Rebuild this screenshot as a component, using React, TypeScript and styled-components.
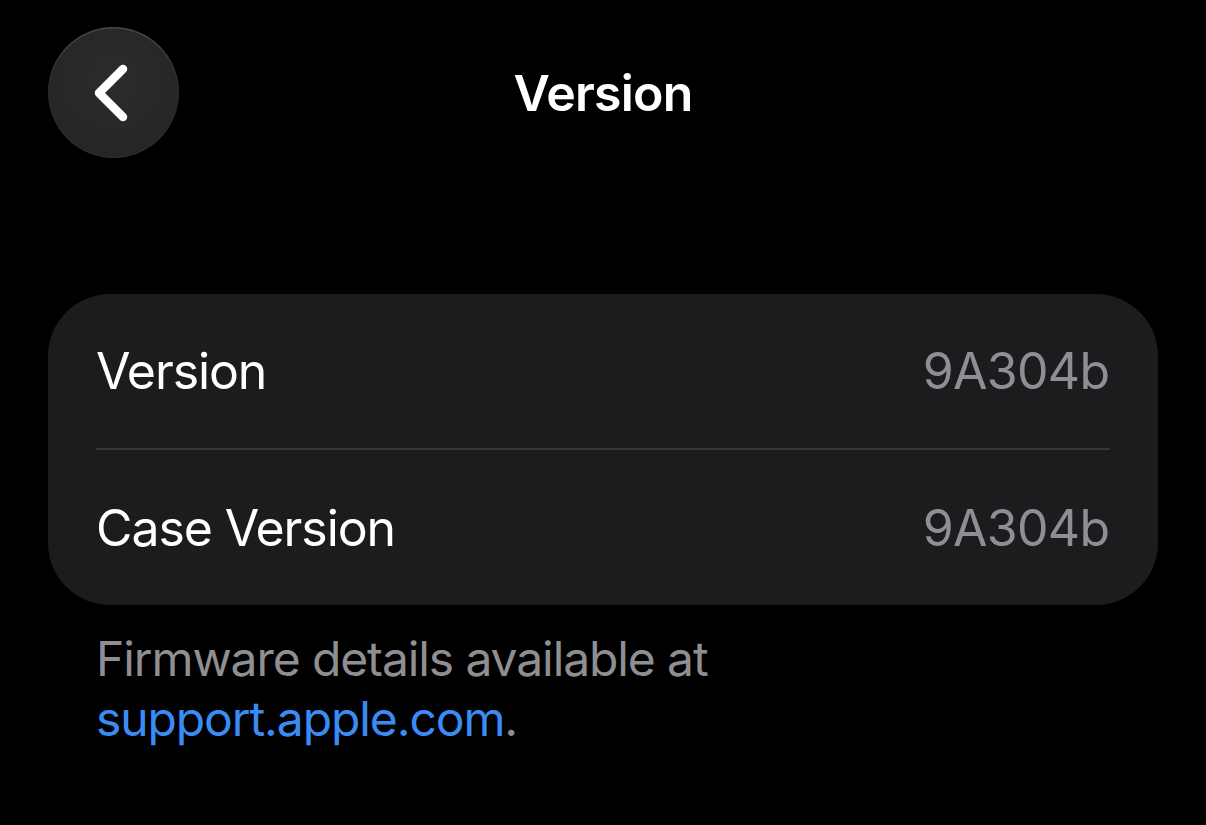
import React from "react";
import styled, { createGlobalStyle } from "styled-components";

const Global = createGlobalStyle`
  html, body { margin: 0; padding: 0; background: #000; }
  body { font-family: Inter, "Noto Sans", "Liberation Sans", sans-serif; -webkit-font-smoothing: antialiased; }
`;

const Page = styled.div`
  width: 1206px;
  height: 825px;
  background: #000;
  box-sizing: border-box;
  padding: 27px 48px 0;
  display: flex;
  flex-direction: column;
`;

const Header = styled.header`
  display: grid;
  grid-template-columns: 131px 1fr 131px;
  align-items: center;
  height: 131px;
`;

const BackButton = styled.button`
  width: 131px;
  height: 131px;
  border-radius: 50%;
  border: none;
  padding: 0;
  background: radial-gradient(circle at 50% 40%, #2c2c2e 0%, #262627 70%, #232324 100%);
  box-shadow: inset 0 1.5px 1px rgba(255, 255, 255, 0.16), inset 0 -1px 1px rgba(255, 255, 255, 0.06);
  display: flex;
  align-items: center;
  justify-content: center;
  cursor: pointer;
`;

const Title = styled.h1`
  margin: 0;
  text-align: center;
  color: #fff;
  font-size: 50px;
  font-weight: 600;
  letter-spacing: -0.8px;
`;

const Card = styled.section`
  margin-top: 136px;
  background: #1c1c1e;
  border-radius: 62px;
  padding: 0 48px 0 50px;
`;

const Row = styled.div<{ $divider?: boolean }>`
  height: ${(p) => (p.$divider ? "154px" : "155px")};
  display: flex;
  align-items: center;
  justify-content: space-between;
  border-bottom: ${(p) => (p.$divider ? "2px solid #38383a" : "none")};
  margin-left: ${(p) => (p.$divider ? "-2px" : "0")};
  padding-left: ${(p) => (p.$divider ? "2px" : "0")};
  font-size: 50px;
`;

const Label = styled.span`
  color: #fff;
  letter-spacing: -1.1px;
  margin-left: -2px;
`;

const Value = styled.span`
  color: #8e8e93;
  letter-spacing: -0.7px;
  margin-right: 0.7px;
`;

const Footer = styled.p`
  margin: 24px 0 0;
  padding-left: 48px;
  font-size: 48px;
  line-height: 60px;
  color: #8e8e93;
  max-width: 680px;
  letter-spacing: -1.1px;
`;

const Link = styled.a`
  color: #3b8bf5;
  text-decoration: none;
`;

export default function App() {
  return (
    <>
      <Global />
      <Page>
        <Header>
          <BackButton aria-label="Back">
            <svg width="60" height="60" viewBox="0 0 60 60">
              <path d="M39 6 L15 30 L39 54" fill="none" stroke="#fff" strokeWidth="8.5" strokeLinecap="round" strokeLinejoin="round" />
            </svg>
          </BackButton>
          <Title>Version</Title>
          <div />
        </Header>
        <Card>
          <Row $divider>
            <Label>Version</Label>
            <Value>9A304b</Value>
          </Row>
          <Row>
            <Label>Case Version</Label>
            <Value>9A304b</Value>
          </Row>
        </Card>
        <Footer>
          Firmware details available at <Link href="#">support.apple.com</Link>.
        </Footer>
      </Page>
    </>
  );
}
